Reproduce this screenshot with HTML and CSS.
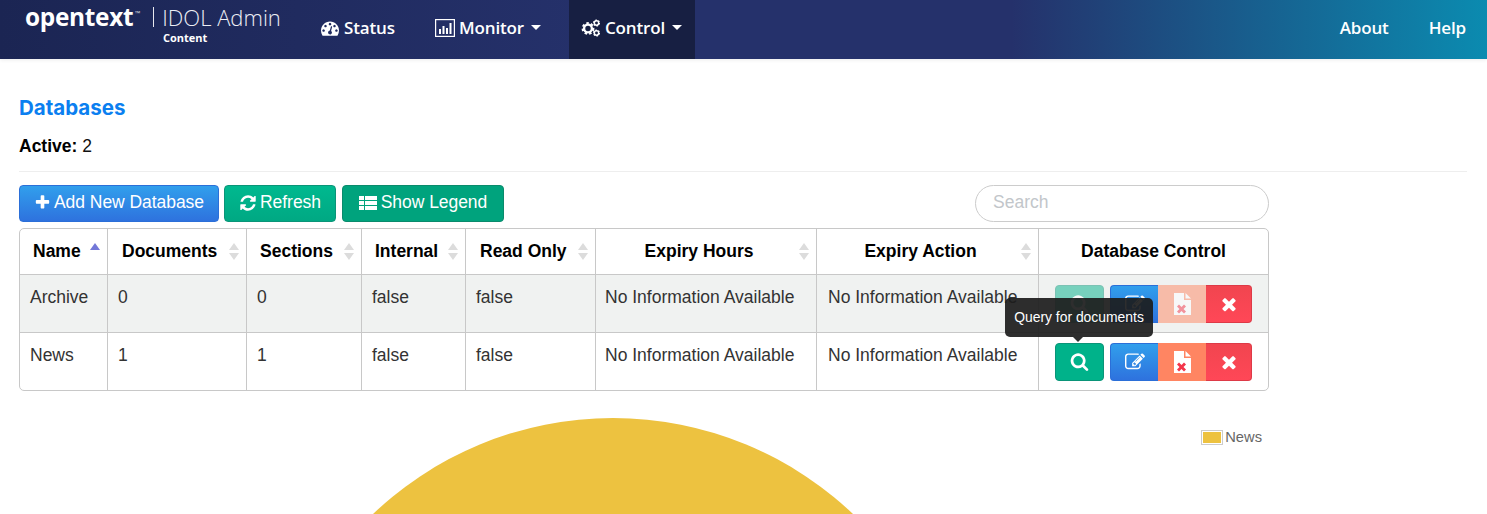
FILE: index.html
```html
<!DOCTYPE html>
<html lang="en">
<head>
<meta charset="utf-8">
<title>IDOL Admin</title>
<link rel="stylesheet" href="styles.css">
</head>
<body>
<svg class="defs" width="0" height="0" aria-hidden="true">
  <defs>
    <symbol id="i-search" viewBox="0 0 1792 1792"><path d="M1216 832q0-185-131.500-316.500t-316.500-131.500-316.500 131.500-131.500 316.500 131.500 316.500 316.500 131.500 316.500-131.500 131.500-316.500zm512 832q0 52-38 90t-90 38q-54 0-90-38l-343-342q-179 124-399 124-143 0-273.500-55.500t-225-150-150-225-55.500-273.500 55.500-273.500 150-225 225-150 273.500-55.500 273.500 55.500 225 150 150 225 55.500 273.500q0 220-124 399l343 343q37 37 37 90z"/></symbol>
    <symbol id="i-edit" viewBox="0 0 1792 1792"><path d="M888 1184l116-116-152-152-116 116v56h96v96h56zm440-720q-16-16-33 1l-350 350q-17 17-1 33t33-1l350-350q17-17 1-33zm80 594v190q0 119-84.500 203.500t-203.500 84.500h-832q-119 0-203.500-84.500t-84.500-203.500v-832q0-119 84.500-203.500t203.500-84.500h832q63 0 117 25 15 7 18 23 3 17-9 29l-49 49q-14 14-32 8-23-6-45-6h-832q-66 0-113 47t-47 113v832q0 66 47 113t113 47h832q66 0 113-47t47-113v-126q0-13 9-22l64-64q15-15 35-7t20 29zm-96-738l288 288-672 672h-288v-288zm444 132l-92 92-288-288 92-92q28-28 68-28t68 28l152 152q28 28 28 68t-28 68z"/></symbol>
    <symbol id="i-times" viewBox="0 0 1792 1792"><path d="M1490 1322q0 40-28 68l-136 136q-28 28-68 28t-68-28l-294-294-294 294q-28 28-68 28t-68-28l-136-136q-28-28-28-68t28-68l294-294-294-294q-28-28-28-68t28-68l136-136q28-28 68-28t68 28l294 294 294-294q28-28 68-28t68 28l136 136q28 28 28 68t-28 68l-294 294 294 294q28 28 28 68z"/></symbol>
    <symbol id="i-file" viewBox="0 0 18 22"><path d="M1 0h10v7h7v15H1z"/><path d="M12.500 0L18 5.500h-5.500z"/><path class="file-x" d="M4 13.500l2-2 2.500 2.500 2.500-2.500 2 2-2.500 2.500 2.500 2.500-2 2-2.500-2.500-2.500 2.500-2-2 2.500-2.500z"/></symbol>
    <symbol id="i-plus" viewBox="0 0 1792 1792"><path d="M1600 736v192q0 40-28 68t-68 28h-416v416q0 40-28 68t-68 28h-192q-40 0-68-28t-28-68v-416h-416q-40 0-68-28t-28-68v-192q0-40 28-68t68-28h416v-416q0-40 28-68t68-28h192q40 0 68 28t28 68v416h416q40 0 68 28t28 68z"/></symbol>
    <symbol id="i-refresh" viewBox="0 0 1792 1792"><path d="M1639 1056q0 5-1 7-64 268-268 434.500t-478 166.500q-146 0-282.500-55t-243.500-157l-129 129q-19 19-45 19t-45-19-19-45v-448q0-26 19-45t45-19h448q26 0 45 19t19 45-19 45l-137 137q71 66 161 102t187 36q134 0 250-65t186-179q11-17 53-117 8-23 30-23h192q13 0 22.500 9.500t9.500 22.500zm25-800v448q0 26-19 45t-45 19h-448q-26 0-45-19t-19-45 19-45l138-138q-148-137-349-137-134 0-250 65t-186 179q-11 17-53 117-8 23-30 23h-199q-13 0-22.500-9.500t-9.500-22.500v-7q65-268 270-434.500t480-166.500q146 0 284 55.500t245 156.500l130-129q19-19 45-19t45 19 19 45z"/></symbol>
  </defs>
</svg>

<header class="topbar">
  <div class="brand">
    <div class="brand-line">
      <span class="brand-mark">opentext</span><span class="brand-tm">™</span><span class="brand-sep"></span><span class="brand-app">IDOL Admin</span>
    </div>
    <div class="brand-sub">Content</div>
  </div>
  <nav class="nav">
    <a class="nav-item nav-status">
      <svg class="nav-icon" viewBox="0 0 1792 1792"><path d="M384 1152q0-53-37.500-90.500t-90.500-37.500-90.500 37.500-37.500 90.500 37.500 90.500 90.500 37.500 90.500-37.500 37.500-90.500zm192-448q0-53-37.500-90.500t-90.500-37.500-90.500 37.500-37.500 90.500 37.500 90.500 90.500 37.500 90.500-37.500 37.500-90.500zm428 481l101-382q6-26-7.500-48.500t-38.500-29.500-48 6.500-30 39.500l-101 382q-60 5-107 43.500t-63 98.500q-20 77 20 146t117 89 146-20 89-117q16-60-6-117t-72-91zm660-33q0-53-37.500-90.500t-90.500-37.500-90.500 37.500-37.500 90.500 37.500 90.500 90.500 37.500 90.500-37.500 37.500-90.500zm-640-640q0-53-37.500-90.500t-90.500-37.500-90.500 37.500-37.500 90.500 37.500 90.500 90.500 37.500 90.500-37.500 37.500-90.500zm448 192q0-53-37.500-90.500t-90.500-37.500-90.500 37.500-37.500 90.500 37.500 90.500 90.500 37.500 90.500-37.500 37.500-90.500zm320 448q0 261-141 483-19 29-54 29h-1402q-35 0-54-29-141-221-141-483 0-182 71-348t191-286 286-191 348-71 348 71 286 191 191 286 71 348z"/></svg>
      Status
    </a>
    <a class="nav-item nav-monitor">
      <svg class="nav-icon" viewBox="0 0 20 18"><rect class="chart-frame" x="0.600" y="0.600" width="18.800" height="16.800"/><path d="M4 10h2v5H4zM7.500 7h2v8h-2zM11 9h2v6h-2zM14.500 4h2v11h-2z"/></svg>
      Monitor<span class="caret"></span>
    </a>
    <a class="nav-item nav-control">
      <svg class="nav-icon" viewBox="0 0 20 18"><circle class="gear-teeth" cx="7" cy="9.500" r="5.200"/><circle class="gear-ring" cx="7" cy="9.500" r="3.900"/><circle class="gear-teeth-s" cx="15.500" cy="4" r="2.800"/><circle class="gear-ring-s" cx="15.500" cy="4" r="2.200"/><circle class="gear-teeth-s" cx="15.500" cy="14" r="2.800"/><circle class="gear-ring-s" cx="15.500" cy="14" r="2.200"/></svg>
      Control<span class="caret"></span>
    </a>
  </nav>
  <nav class="nav-right">
    <a class="nav-item nav-about">About</a>
    <a class="nav-item nav-help">Help</a>
  </nav>
</header>

<main class="content">
  <h2 class="title">Databases</h2>
  <p class="active"><strong>Active:</strong> 2</p>
  <hr class="rule">

  <div class="table-wrap">
    <div class="toolbar">
      <button class="btn btn-blue btn-add"><svg class="ic"><use href="#i-plus"/></svg>Add New Database</button>
      <button class="btn btn-green btn-refresh"><svg class="ic"><use href="#i-refresh"/></svg>Refresh</button>
      <button class="btn btn-dgreen btn-legend"><svg class="ic ic-list" viewBox="0 0 18 14"><path d="M0 0h5v4H0zM6 0h12v4H6zM0 5h5v4H0zM6 5h12v4H6zM0 10h5v4H0zM6 10h12v4H6z"/></svg>Show Legend</button>
      <input class="search" type="text" placeholder="Search">
    </div>

    <table class="grid">
      <colgroup>
        <col class="c1"><col class="c2"><col class="c3"><col class="c4"><col class="c5"><col class="c6"><col class="c7"><col class="c8">
      </colgroup>
      <thead>
        <tr>
          <th class="left tight sort sort-asc">Name</th>
          <th class="left sort">Documents</th>
          <th class="left tight sort">Sections</th>
          <th class="left tight sort">Internal</th>
          <th class="left sort">Read Only</th>
          <th class="sort shifted">Expiry Hours</th>
          <th class="sort shifted">Expiry Action</th>
          <th>Database Control</th>
        </tr>
      </thead>
      <tbody>
        <tr class="odd">
          <td>Archive</td><td>0</td><td>0</td><td>false</td><td>false</td>
          <td class="info-a">No Information Available</td><td class="info-b">No Information Available</td>
          <td class="ctl">
            <div class="ctl-row">
              <button class="cbtn cbtn-search faded"><svg class="cic"><use href="#i-search"/></svg></button>
              <div class="cgroup">
                <button class="cbtn cbtn-edit"><svg class="cic"><use href="#i-edit"/></svg></button>
                <button class="cbtn cbtn-file faded"><svg class="cic-file"><use href="#i-file"/></svg></button>
                <button class="cbtn cbtn-del"><svg class="cic"><use href="#i-times"/></svg></button>
              </div>
            </div>
          </td>
        </tr>
        <tr>
          <td>News</td><td>1</td><td>1</td><td>false</td><td>false</td>
          <td class="info-a">No Information Available</td><td class="info-b">No Information Available</td>
          <td class="ctl">
            <div class="ctl-row">
              <button class="cbtn cbtn-search"><svg class="cic"><use href="#i-search"/></svg></button>
              <div class="cgroup">
                <button class="cbtn cbtn-edit"><svg class="cic"><use href="#i-edit"/></svg></button>
                <button class="cbtn cbtn-file"><svg class="cic-file"><use href="#i-file"/></svg></button>
                <button class="cbtn cbtn-del"><svg class="cic"><use href="#i-times"/></svg></button>
              </div>
            </div>
            <div class="tooltip">Query for documents</div>
          </td>
        </tr>
      </tbody>
    </table>

    <section class="chart">
      <svg class="pie" viewBox="0 0 1250 123" width="1250" height="123"><circle cx="594" cy="375" r="348" fill="#edc240"/></svg>
      <div class="legend"><span class="swatch"><span class="swatch-fill"></span></span><span class="legend-label">News</span></div>
    </section>
  </div>
</main>
</body>
</html>
```

FILE: styles.css
```css
* { box-sizing: border-box; }
html, body { margin: 0; padding: 0; height: 100%; overflow: hidden; background: #fff; }
body { font-family: "Liberation Sans", Arial, sans-serif; color: #212529; font-size: 17.5px; }
.defs { position: absolute; }

/* top bar */
.topbar {
  height: 59px;
  display: flex;
  align-items: stretch;
  color: #fff;
  background: linear-gradient(to right, #1b2553 0%, #25316b 40%, #25316b 68%, #0b8bb0 100%);
  box-shadow: 0 1px 4px rgba(0,0,0,.08);
}
.brand { width: 305px; padding: 4px 0 0 25px; flex: none; }
.brand-line { display: flex; align-items: center; height: 26px; }
.brand-mark { font-family: "Open Sans", sans-serif; font-weight: 700; font-size: 24.400px; letter-spacing: -.3px; line-height: 26px; }
.brand-tm { font-size: 6px; width: 6px; align-self: flex-start; margin: 6px 0 0 1px; opacity: .8; }
.brand-sep { width: 1px; height: 20px; background: #e8e8ee; margin: 0 8px 0 13px; }
.brand-app { font-family: "Open Sans", sans-serif; font-weight: 300; font-size: 22px; line-height: 26px; color: #eceef5; white-space: nowrap; }
.brand-sub { font-family: "Open Sans", sans-serif; font-weight: 700; font-size: 11px; line-height: 13px; margin: 1px 0 0 138px; }

.nav, .nav-right { display: flex; align-items: stretch; }
.nav-right { margin-left: auto; }
.nav-item { display: flex; align-items: center; padding-bottom: 4px; font-family: "Open Sans", sans-serif; font-weight: 600; font-size: 17px; color: #fff; letter-spacing: -.15px; }
.nav-status { padding-left: 15px; width: 115px; }
.nav-monitor { padding-left: 15px; width: 149px; }
.nav-control { padding-left: 12px; width: 126px; background: #171f42; }
.nav-about { padding-right: 40px; }
.nav-help { padding-right: 21px; }
.nav-icon { width: 20px; height: 18px; fill: #fff; margin-right: 4px; flex: none; }
.chart-frame { fill: none; stroke: #fff; stroke-width: 1.200; }
.gear-teeth { fill: none; stroke: #fff; stroke-width: 2.400; stroke-dasharray: 2.400 2.050; }
.gear-ring { fill: none; stroke: #fff; stroke-width: 2.400; }
.gear-teeth-s { fill: none; stroke: #fff; stroke-width: 1.500; stroke-dasharray: 1.500 1.430; }
.gear-ring-s { fill: none; stroke: #fff; stroke-width: 1.500; }
.caret { width: 0; height: 0; margin-left: 7px; border: 5px solid transparent; border-top-color: #fff; border-bottom: 0; }

/* content */
.content { padding: 0 20px 0 19px; }
.title { margin: 36px 0 0; font-family: Inter, sans-serif; font-weight: 700; font-size: 20.500px; line-height: 25px; color: #0b7ff0; }
.active { margin: 16px 0 0; line-height: 20px; color: #111; }
.active strong { color: #000; }
.rule { margin: 15px 0 0; border: 0; border-top: 1px solid #eee; }

.table-wrap { width: 1250px; }
.toolbar { display: flex; align-items: center; gap: 5px; margin-top: 13px; height: 37px; }
.btn {
  height: 37px; padding: 0 0 2px; border-radius: 4px; color: #fff;
  font-family: "Liberation Sans", Arial, sans-serif; font-size: 17.5px; letter-spacing: -.05px;
  display: flex; align-items: center; justify-content: center; gap: 3px; white-space: nowrap; cursor: pointer;
}
.btn-add { width: 200px; }
.btn-refresh { width: 112px; }
.btn-legend { width: 162px; gap: 4px; margin-left: 1px; }
.btn-blue { border: 1px solid #2b6fd8; background: linear-gradient(#319fec, #2e72de); }
.btn-green { border: 1px solid #0a9478; background: linear-gradient(#00b98f, #00a883); }
.btn-dgreen { border: 1px solid #0a8a6c; background: #00a37d; }
.ic { width: 17px; height: 17px; fill: #fff; }
.btn-refresh .ic { width: 18px; height: 18px; }
.ic-list { width: 18px; height: 14px; }
.search {
  margin-left: auto; width: 294px; height: 37px; padding: 0 17px 2px;
  border: 1px solid #ccc; border-radius: 19px; outline: 0; background: #fff;
  font-family: "Liberation Sans", Arial, sans-serif; font-size: 17.5px;
}
.search::placeholder { color: #c2c6ca; opacity: 1; }

/* table */
.grid { width: 1250px; margin-top: 6px; table-layout: fixed; border-collapse: separate; border-spacing: 0; border: 1px solid #c8c8c8; border-radius: 5px; }
.c1 { width: 88px; } .c2 { width: 139px; } .c3 { width: 115px; } .c4 { width: 104px; }
.c5 { width: 130px; } .c6 { width: 221px; } .c7 { width: 222px; } .c8 { width: 229px; }
.grid th, .grid td { border-right: 1px solid #c8c8c8; border-bottom: 1px solid #c8c8c8; }
.grid th:last-child, .grid td:last-child { border-right: 0; }
.grid tbody tr:last-child td { border-bottom: 0; }
.grid th { height: 46px; padding: 0 10px; font-size: 17.5px; font-weight: 700; color: #000; position: relative; text-align: center; white-space: nowrap; }
.grid th.left { text-align: left; padding-left: 14px; }
.grid th.left.tight { padding-left: 13px; }
.grid th.shifted { padding-right: 24px; }
.grid td { height: 58px; padding: 0 10px 12px; color: #333; white-space: nowrap; overflow: visible; }
.grid td.info-a { padding-left: 9px; }
.grid td.info-b { padding-left: 11px; }
.grid tbody tr:last-child td { height: 57px; }
.odd td { background: #f0f2f1; }

.sort::before, .sort::after { content: ""; position: absolute; right: 7px; width: 0; height: 0; border-left: 5.500px solid transparent; border-right: 5.500px solid transparent; }
.sort::before { top: 14px; border-bottom: 7px solid #dcdcdc; }
.sort::after { top: 24px; border-top: 7px solid #dcdcdc; }
.sort-asc::before { border-bottom-color: #7378d8; }
.sort-asc::after { border-top-color: transparent; }

/* control cell */
.grid td.ctl { padding: 0 16px; position: relative; }
.ctl-row { display: flex; gap: 6px; }
.cbtn { height: 38px; display: flex; align-items: center; justify-content: center; padding: 0; border: 0; }
.cgroup { display: flex; }
.cbtn-search { width: 49px; border-radius: 4px; border: 1px solid #0a9478; background: #00b28a; }
.cbtn-edit { width: 48px; border: 1px solid #2b6fd8; border-right: 0; border-radius: 4px 0 0 4px; background: linear-gradient(#319fec, #2e72de); }
.cbtn-file { width: 48px; background: #ff8562; }
.cbtn-del { width: 46px; border: 1px solid #dd3a47; border-left: 0; border-radius: 0 4px 4px 0; background: linear-gradient(#f1454f, #ff4757); }
.faded { opacity: .5; }
.cic { width: 20px; height: 20px; fill: #fff; }
.cbtn-search .cic { width: 19px; height: 19px; }
.cic-file { width: 18px; height: 22px; fill: #fff; }
.file-x { fill: #f4354a; }

.tooltip {
  position: absolute; left: -34px; top: -35px; width: 148px; height: 39px; padding-bottom: 2px;
  display: flex; align-items: center; justify-content: center;
  background: rgba(28,28,28,.92); border-radius: 5px; color: #fff; font-size: 13.900px; white-space: nowrap;
}
.tooltip::after { content: ""; position: absolute; left: 68px; bottom: -5px; width: 0; height: 0; border: 5px solid transparent; border-top-color: rgba(28,28,28,.92); border-bottom: 0; }

/* chart */
.chart { position: relative; height: 123px; overflow: hidden; }
.pie { display: block; }
.legend { position: absolute; right: 7px; top: 38px; display: flex; align-items: center; gap: 2px; font-size: 14.700px; color: #666; }
.swatch { width: 22px; height: 15px; border: 1px solid #ccc; padding: 1px; display: block; }
.swatch-fill { display: block; width: 100%; height: 100%; background: #edc240; }
```
